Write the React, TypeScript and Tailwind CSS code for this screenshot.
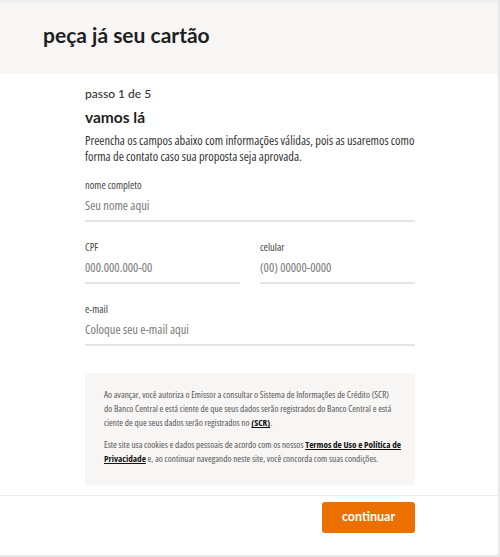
import { useState } from 'react'

function Field({ label, placeholder }: { label: string; placeholder: string }) {
  const [value, setValue] = useState('')
  return (
    <div className="flex flex-col">
      <label className="text-[10.5px] leading-[12px] text-[#444]">{label}</label>
      <input
        type="text"
        value={value}
        onChange={(e) => setValue(e.target.value)}
        placeholder={placeholder}
        className="mt-[3px] h-[28px] border-b-2 border-[#e4e4e4] bg-transparent pb-[3px] text-[12.5px] text-[#222] placeholder-[#787878] outline-none"
      />
    </div>
  )
}

export default function App() {
  return (
    <div
      className="flex h-[557px] w-[500px] flex-col border-r-2 border-b-2 border-[#e8e8e8] bg-white font-stretch-condensed text-[#222]"
      style={{ fontFamily: '"Open Sans", Lato, sans-serif' }}
    >
      <header className="flex h-[74px] shrink-0 items-center border-t-[3px] border-[#f0f0f0] bg-[#f7f6f5] px-[43px] pb-[8px]">
        <h1 className="font-['Lato'] text-[21px] font-bold text-[#1f1f1f]">peça já seu cartão</h1>
      </header>

      <main className="shrink-0 pt-[12px] pr-[83px] pb-[10px] pl-[85px]">
        <p className="font-['Lato'] text-[12px] font-medium leading-[16px] text-[#333]">passo 1 de 5</p>
        <h2 className="mt-[4px] font-['Lato'] text-[15.5px] font-bold leading-[22px] text-[#1f1f1f]">vamos lá</h2>
        <p className="mt-[5px] text-[12.4px] leading-[16px] text-[#333]">
          Preencha os campos abaixo com informações válidas, pois as usaremos como forma de contato caso sua proposta seja aprovada.
        </p>

        <div className="mt-[14px] flex flex-col gap-[19px]">
          <Field label="nome completo" placeholder="Seu nome aqui" />
          <div className="grid grid-cols-2 gap-[20px]">
            <Field label="CPF" placeholder="000.000.000-00" />
            <Field label="celular" placeholder="(00) 00000-0000" />
          </div>
          <Field label="e-mail" placeholder="Coloque seu e-mail aqui" />
        </div>

        <div className="mt-[27px] bg-[#f7f6f5] pt-[15px] pr-[12px] pb-[19px] pl-[19px] text-[9.2px] leading-[14px] text-[#555]">
          <p>
            Ao avançar, você autoriza o Emissor a consultar o Sistema de Informações de Crédito (SCR)
            <br />
            do Banco Central e está ciente de que seus dados serão registrados do Banco Central e está ciente de que seus dados serão registrados no{' '}
            <a href="#" className="font-bold text-[#111] underline">(SCR)</a>.
          </p>
          <p className="mt-[8px]">
            Este site usa cookies e dados pessoais de acordo com os nossos{' '}
            <a href="#" className="font-bold text-[#111] underline">Termos de Uso e Política de Privacidade</a>{' '}
            e, ao continuar navegando neste site, você concorda com suas condições.
          </p>
        </div>
      </main>

      <footer className="mt-auto flex h-[60px] shrink-0 items-start justify-end border-t border-[#ececec] px-[83px] pt-[6px]">
        <button
          type="button"
          className="h-[31px] w-[93px] rounded-[3px] bg-[#ec7000] font-['Lato'] text-[12.5px] font-bold text-white"
        >
          continuar
        </button>
      </footer>
    </div>
  )
}
